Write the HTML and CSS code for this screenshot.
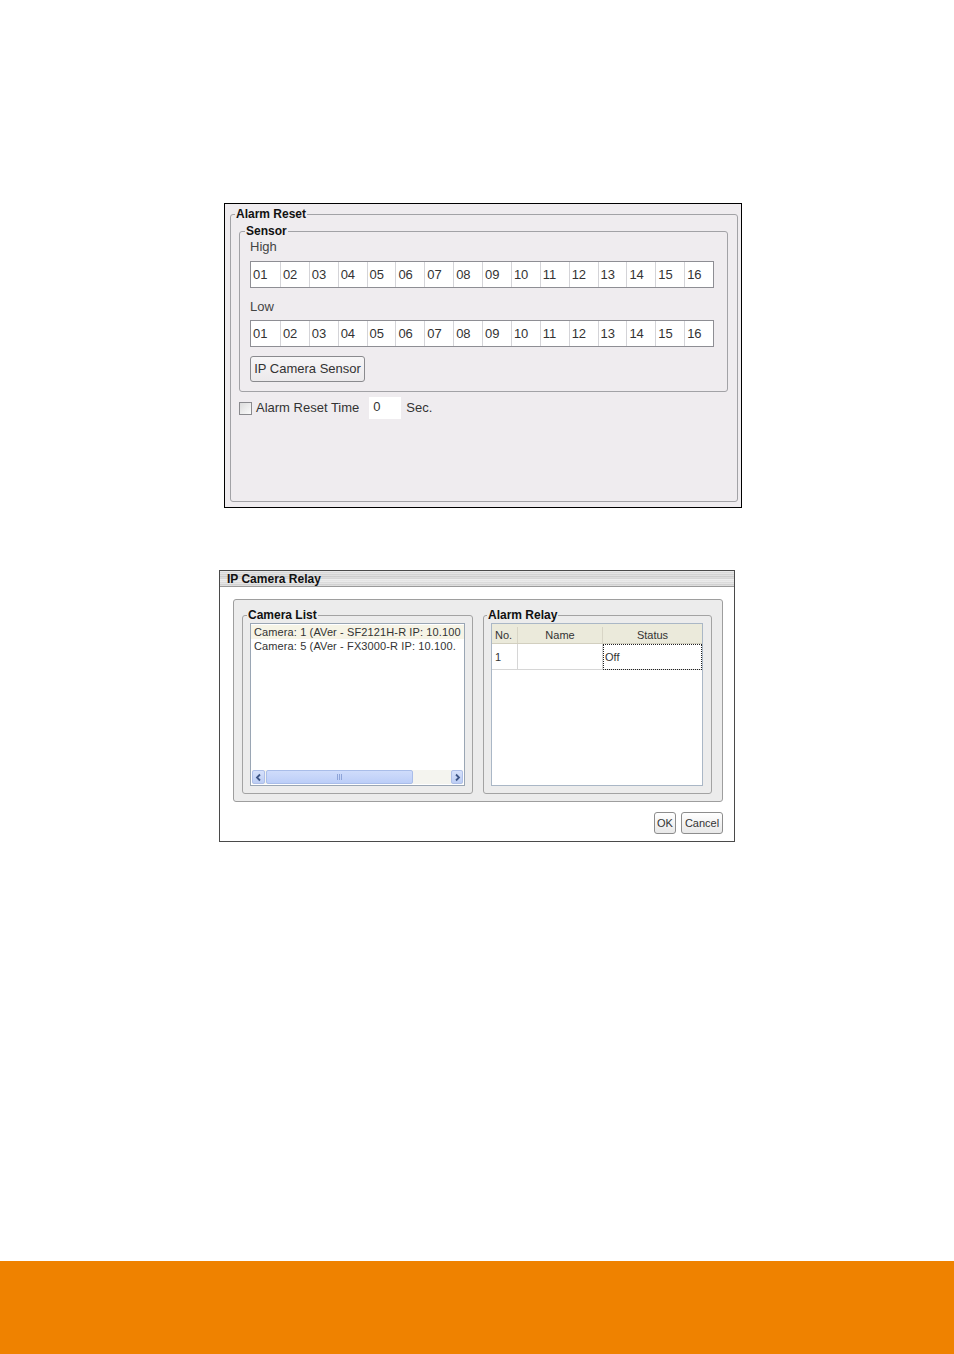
FILE: index.html
```html
<!DOCTYPE html>
<html lang="en">
<head>
<meta charset="utf-8">
<title>Alarm Reset / IP Camera Relay</title>
<link rel="stylesheet" href="styles.css">
</head>
<body>
<div class="page">
  <div class="dlg1">
    <fieldset class="grp grp-reset">
      <legend>Alarm Reset</legend>
      <fieldset class="grp grp-sensor">
        <legend>Sensor</legend>
        <div class="sensor-body">
          <div class="lbl lbl-high">High</div>
          <div class="cells">
            <span>01</span><span>02</span><span>03</span><span>04</span><span>05</span><span>06</span><span>07</span><span>08</span><span>09</span><span>10</span><span>11</span><span>12</span><span>13</span><span>14</span><span>15</span><span>16</span>
          </div>
          <div class="lbl lbl-low">Low</div>
          <div class="cells cells-low">
            <span>01</span><span>02</span><span>03</span><span>04</span><span>05</span><span>06</span><span>07</span><span>08</span><span>09</span><span>10</span><span>11</span><span>12</span><span>13</span><span>14</span><span>15</span><span>16</span>
          </div>
          <button class="btn1" type="button">IP Camera Sensor</button>
        </div>
      </fieldset>
      <div class="reset-row">
        <span class="chk"></span>
        <span class="reset-lbl">Alarm Reset Time</span>
        <span class="num">0</span>
        <span class="sec">Sec.</span>
      </div>
    </fieldset>
  </div>

  <div class="dlg2">
    <div class="titlebar">IP Camera Relay</div>
    <div class="panel">
      <fieldset class="grp2 grp-cam">
        <legend>Camera List</legend>
        <div class="listbox">
          <div class="items">
            <div class="item sel">Camera: 1 (AVer - SF2121H-R IP: 10.100</div>
            <div class="item">Camera: 5 (AVer - FX3000-R IP: 10.100.</div>
          </div>
          <div class="hscroll">
            <span class="sb-btn"><svg width="9" height="9" viewBox="0 0 9 9"><polyline points="6,1.5 3,4.5 6,7.5" fill="none" stroke="#3e5687" stroke-width="1.8"/></svg></span>
            <span class="sb-thumb"><svg width="7" height="6" viewBox="0 0 7 6"><path d="M1.5 0v6M3.5 0v6M5.5 0v6" stroke="#8ea4d8" stroke-width="1"/></svg></span>
            <span class="sb-track"></span>
            <span class="sb-btn sb-right"><svg width="9" height="9" viewBox="0 0 9 9"><polyline points="3,1.5 6,4.5 3,7.5" fill="none" stroke="#3e5687" stroke-width="1.8"/></svg></span>
          </div>
        </div>
      </fieldset>
      <fieldset class="grp2 grp-relay">
        <legend>Alarm Relay</legend>
        <div class="table">
          <div class="thead">
            <span class="c-no">No.</span>
            <span class="c-name">Name</span>
            <span class="c-status">Status</span>
          </div>
          <div class="trow">
            <span class="c-no">1</span>
            <span class="c-name"></span>
            <span class="c-status focus">Off</span>
          </div>
        </div>
      </fieldset>
    </div>
    <div class="btns">
      <button class="btn2 btn-ok" type="button">OK</button>
      <button class="btn2 btn-cancel" type="button">Cancel</button>
    </div>
  </div>

  <div class="footer"></div>
</div>
</body>
</html>
```

FILE: styles.css
```css
* { box-sizing: border-box; }

html, body {
  margin: 0;
  padding: 0;
  background: #ffffff;
}

body {
  font-family: "Liberation Sans", Arial, sans-serif;
  color: #333333;
}

.page {
  width: 954px;
  height: 1354px;
  display: flex;
  flex-direction: column;
  overflow: hidden;
}

/* ---------- Dialog 1: Alarm Reset ---------- */
.dlg1 {
  margin: 203px 0 0 224px;
  width: 518px;
  height: 305px;
  border: 1px solid #000000;
  background: #efecef;
  padding: 3px 3px 5px 5px;
  display: flex;
  flex-direction: column;
}

.grp {
  margin: 0;
  padding: 0;
  min-width: 0;
  border: 1px solid #a2a2a6;
  border-radius: 3px;
}

.grp > legend {
  font: bold 12px/14px "Liberation Sans", Arial, sans-serif;
  color: #111111;
  padding: 0 1px;
}

.grp-reset {
  width: 508px;
  flex: 1;
}

.grp-reset > legend { margin-left: 4px; }

.grp-sensor {
  margin: 3px 9px 0 8px;
}

.grp-sensor > legend { margin-left: 5px; }

.sensor-body {
  padding: 1px 12px 9px 10px;
}

.lbl {
  font-size: 13px;
  line-height: 16px;
  color: #444444;
}

.cells {
  margin-top: 6px;
  width: 464px;
  height: 27px;
  border: 1px solid #8e8e94;
  background: #ffffff;
  display: grid;
  grid-template-columns: repeat(16, 1fr);
}

.cells span {
  font-size: 13px;
  line-height: 25px;
  padding-left: 2px;
  color: #333333;
  border-left: 1px solid #d4d4d8;
}

.cells span:first-child { border-left: none; }

.lbl-low { margin-top: 11px; }
.cells-low { margin-top: 5px; }

.btn1 {
  display: block;
  margin-top: 9px;
  width: 115px;
  height: 26px;
  padding: 0;
  font: 13px/24px "Liberation Sans", Arial, sans-serif;
  color: #333333;
  border: 1px solid #8a8a8e;
  border-radius: 3px;
  background: linear-gradient(#f7f6f7, #ebe9eb);
}

.reset-row {
  margin-top: 4px;
  height: 22px;
  padding-left: 8px;
  display: flex;
  align-items: center;
  font-size: 13px;
  color: #333333;
}

.chk {
  width: 13px;
  height: 13px;
  border: 1px solid #8a8a8e;
  background: linear-gradient(135deg, #dcdcdc, #fbfbfb);
  margin-top: 2px;
}

.reset-lbl { margin-left: 4px; }

.num {
  margin-left: 10px;
  margin-top: 2px;
  width: 32px;
  height: 22px;
  line-height: 20px;
  padding-left: 4px;
  background: #ffffff;
}

.sec { margin-left: 5px; }

/* ---------- Dialog 2: IP Camera Relay ---------- */
.dlg2 {
  margin: 62px 0 0 219px;
  width: 516px;
  height: 272px;
  border: 1px solid #4a4a4a;
  background: #ffffff;
  display: flex;
  flex-direction: column;
}

.titlebar {
  height: 16px;
  padding-left: 7px;
  font: bold 12px/16px "Liberation Sans", Arial, sans-serif;
  color: #111111;
  border-bottom: 1px solid #9a9a9a;
  background:
    repeating-linear-gradient(180deg, rgba(255,255,255,0.35) 0 1px, rgba(0,0,0,0) 1px 2px),
    linear-gradient(#dedede, #c9c9c9 45%, #e8e8e8 58%, #cbcbcb);
}

.panel {
  margin: 12px 0 0 13px;
  width: 490px;
  height: 203px;
  border: 1px solid #9e9e9e;
  border-radius: 3px;
  background: #ececec;
  padding: 8px 10px 7px 8px;
  display: flex;
  gap: 10px;
}

.grp2 {
  margin: 0;
  padding: 0;
  min-width: 0;
  border: 1px solid #a3a3a3;
  border-radius: 3px;
}

.grp2 > legend {
  font: bold 12px/14px "Liberation Sans", Arial, sans-serif;
  color: #111111;
  padding: 0 1px;
}

.grp-cam { width: 231px; }
.grp-cam > legend { margin-left: 4px; }
.grp-relay { width: 229px; }
.grp-relay > legend { margin-left: 3px; }

.listbox {
  margin: 1px 0 0 7px;
  width: 215px;
  height: 163px;
  border: 1px solid #9aa6b4;
  background: #ffffff;
  display: flex;
  flex-direction: column;
}

.items {
  flex: 1;
  padding-top: 1px;
  overflow: hidden;
}

.item {
  font-size: 11px;
  line-height: 14px;
  padding-left: 3px;
  letter-spacing: 0.12px;
  white-space: nowrap;
  color: #333333;
}

.item.sel { background: #f6f4e6; }

.hscroll {
  margin: 0 1px 1px 1px;
  height: 14px;
  display: flex;
  background: #f4f4ef;
}

.sb-btn {
  width: 13px;
  height: 14px;
  border: 1px solid #aebfe8;
  border-radius: 2px;
  background: linear-gradient(#d6e1fb, #bccdf4);
  display: flex;
  align-items: center;
  justify-content: center;
}

.sb-right { width: 12px; }

.sb-thumb {
  margin-left: 1px;
  width: 147px;
  height: 14px;
  border: 1px solid #a9bde9;
  border-radius: 2px;
  background: linear-gradient(#cfdcfb, #bcceF8);
  display: flex;
  align-items: center;
  justify-content: center;
}

.sb-track { flex: 1; }

.table {
  margin: 1px 0 0 7px;
  width: 212px;
  height: 163px;
  border: 1px solid #aab7c6;
  background: #ffffff;
}

.thead, .trow {
  display: grid;
  grid-template-columns: 26px 85px 1fr;
  font-size: 11px;
  color: #333333;
}

.thead {
  height: 20px;
  padding-top: 3px;
  line-height: 16px;
  background: #ebeadb;
  border-bottom: 1px solid #d2cfbf;
}

.thead span {
  border-right: 1px solid #d8d5c6;
  text-align: center;
}

.thead span:last-child { border-right: none; }
.thead .c-no { text-align: left; padding-left: 3px; }

.trow {
  height: 26px;
  line-height: 26px;
  border-bottom: 1px solid #d6d6d6;
}

.trow span { border-right: 1px solid #d6d6d6; }
.trow .c-no { padding-left: 3px; }
.trow .c-status {
  border: 1px dotted #222222;
  line-height: 24px;
  padding-left: 1px;
}

.btns {
  margin: 10px 0 0 13px;
  width: 490px;
  display: flex;
  justify-content: flex-end;
  gap: 5px;
}

.btn2 {
  height: 22px;
  padding: 0;
  font: 11px/20px "Liberation Sans", Arial, sans-serif;
  color: #333333;
  border: 1px solid #8d8d8d;
  border-radius: 3px;
  background: linear-gradient(#ffffff, #e8e8e8);
}

.btn-ok { width: 22px; }
.btn-cancel { width: 42px; }

/* ---------- Footer ---------- */
.footer {
  margin-top: auto;
  height: 93px;
  background: #ef8200;
}
```
